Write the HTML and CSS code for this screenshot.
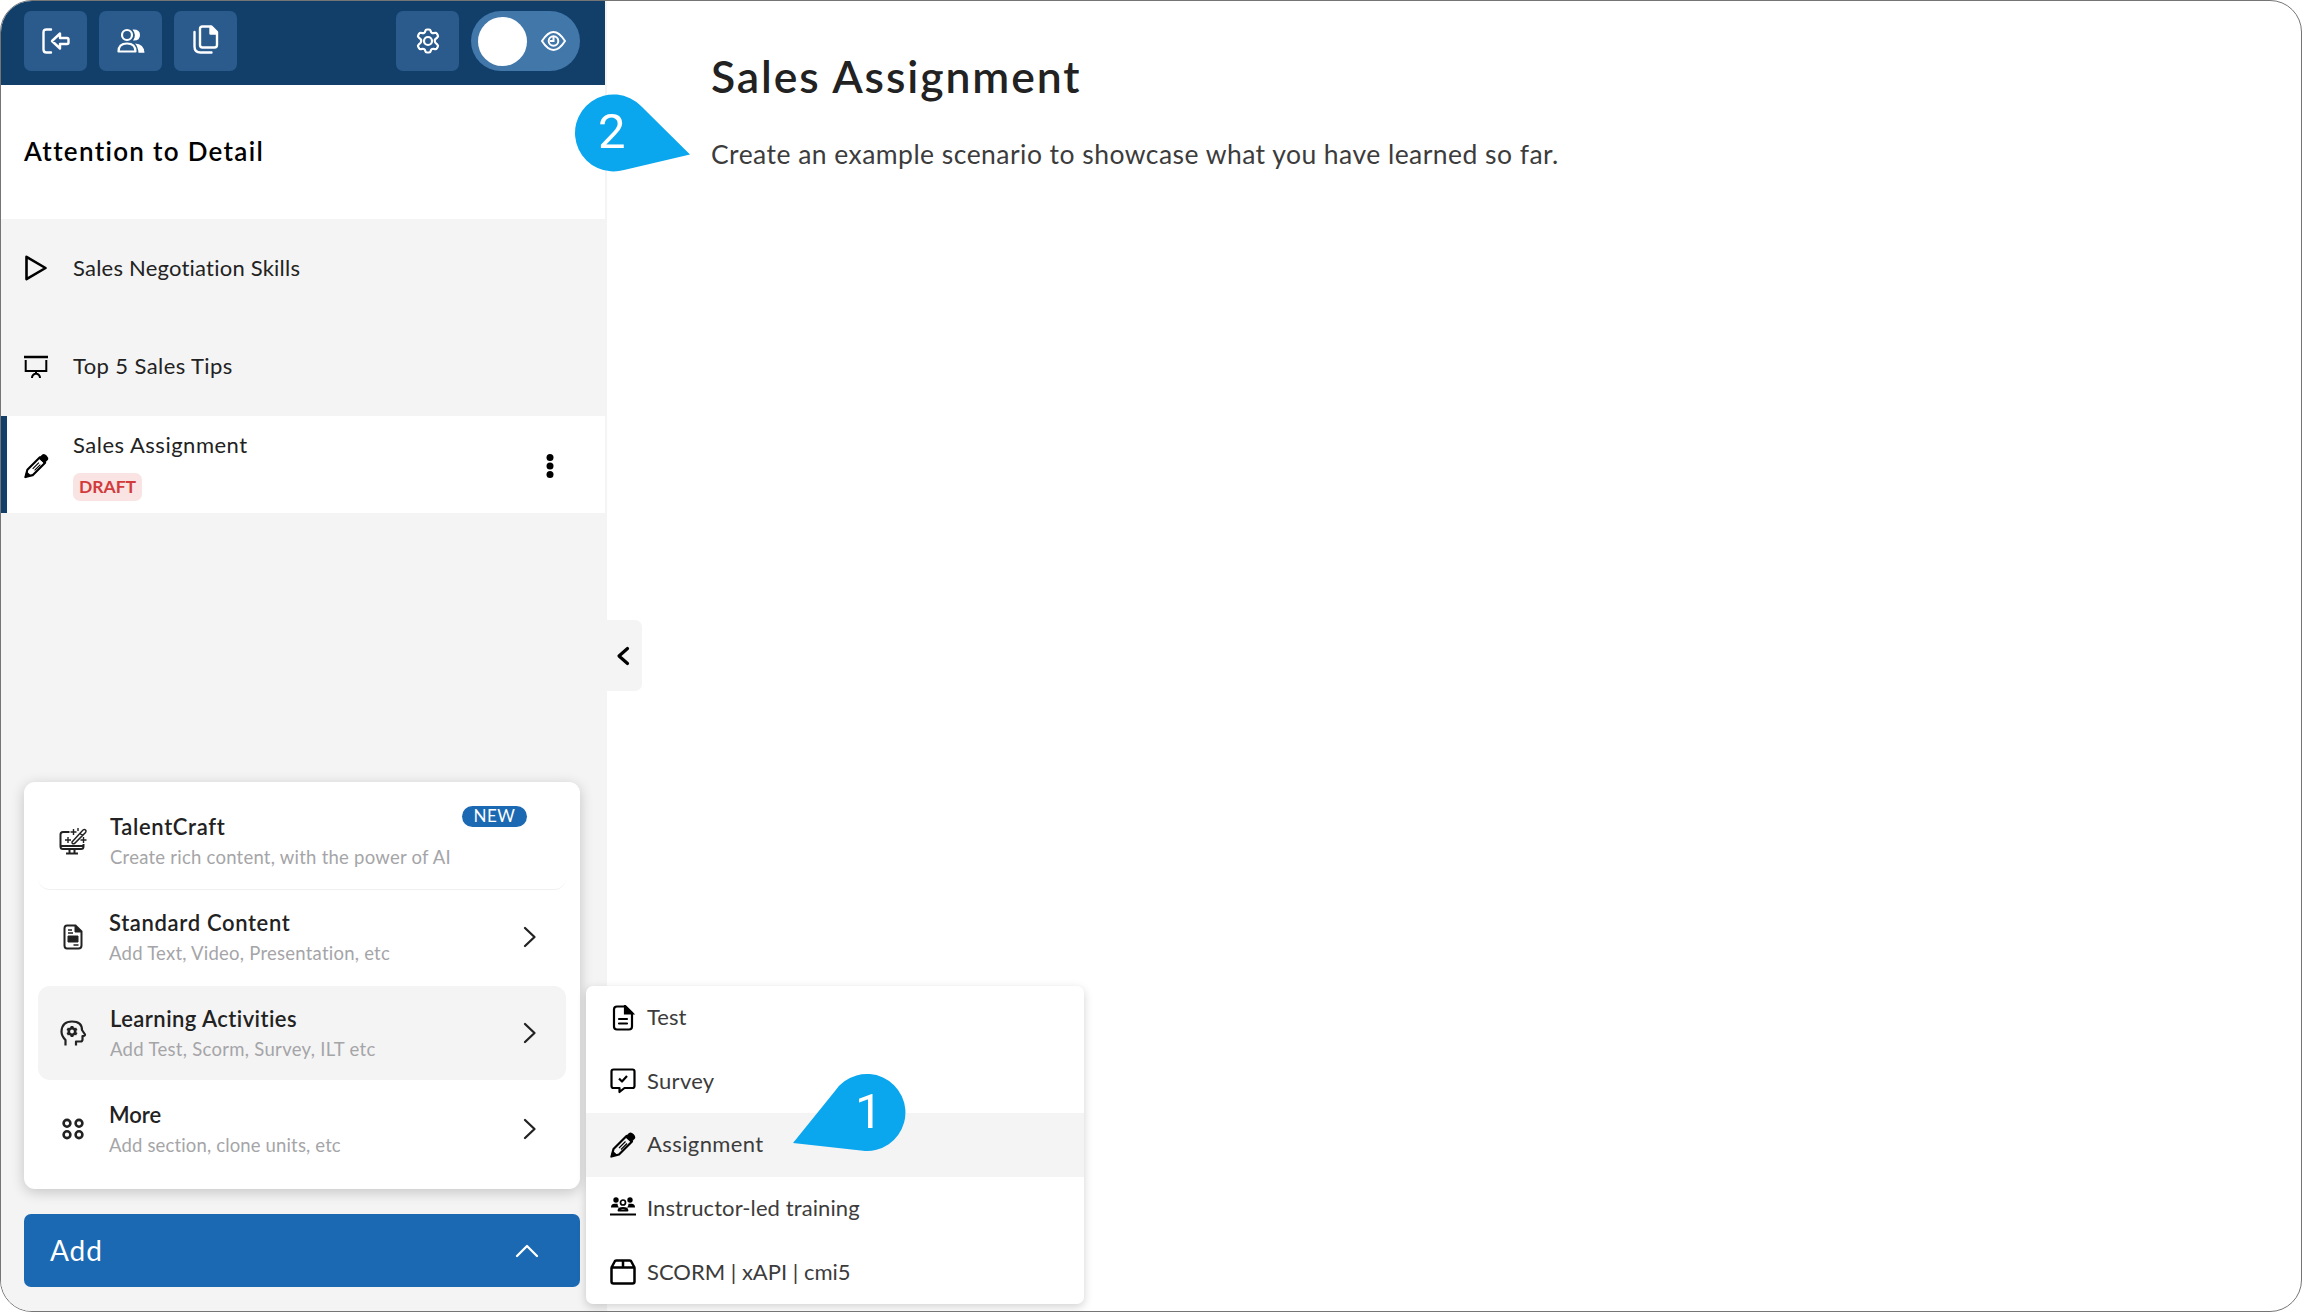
FILE: index.html
```html
<!DOCTYPE html>
<html lang="en">
<head>
	<meta charset="UTF-8">
	<title>Sales Assignment</title>
	<link rel="stylesheet" href="styles.css">
</head>
<body>
<svg class="defs" width="0" height="0">
	<symbol id="i-pencil" viewBox="0 0 26 26">
		<path d="M1.500 24.500L3.500 17 16.500 4l5.500 5.500L9 22.500z" fill="none" stroke="currentColor" stroke-width="2.200" stroke-linejoin="round"/>
		<path d="M15 5l4-4q2-1.500 4.500 1t1.500 4.500l-4 4zM.5 25.500l2-7 5 4.500z" fill="currentColor"/>
		<path d="M9 16l6.500-6.500M11 17.500l6-6" stroke="currentColor" stroke-width="1.200"/>
	</symbol>
	<symbol id="i-right" viewBox="0 0 14 22">
		<path d="M2 2l9.500 9L2 20" fill="none" stroke="currentColor" stroke-width="2.300" stroke-linecap="round" stroke-linejoin="round"/>
	</symbol>
</svg>

<div class="app">
	<div class="sidebar">
		<div class="toolbar">
			<button class="tool">
				<svg width="28" height="26" viewBox="0 0 28 26" fill="none" stroke="currentColor" stroke-width="2.400" stroke-linecap="round" stroke-linejoin="round"><path d="M9 1.500H4.500q-3 0-3 3v17q0 3 3 3H9M10 13l8-7.500v4.500h7q1.500 0 1.500 1.500v3q0 1.500-1.500 1.500h-7v4.500z"/></svg>
			</button>
			<button class="tool">
				<svg width="28" height="26" viewBox="0 0 28 26" fill="none" stroke="currentColor" stroke-width="2.200"><circle cx="10" cy="7" r="5"/><path d="M1.500 23.500q0-8 8.500-8t8.500 8z" stroke-linejoin="round"/><path d="M15.500 1.500q7.500-.5 7.500 5.500t-7 5.500q4-5.500-.5-11zM18 15.500q9 .5 9.500 9.200h-6q-.5-6-3.500-9.200z" fill="currentColor" stroke="none"/></svg>
			</button>
			<button class="tool">
				<svg class="up" width="26" height="29" viewBox="0 0 26 29" fill="none" stroke="currentColor" stroke-width="2.400" stroke-linecap="round" stroke-linejoin="round"><path d="M9.500 1.500h9l5.500 5.500v13q0 2.500-2.500 2.500h-12Q7 22.500 7 20V4q0-2.500 2.500-2.500zM1.500 7v14.500q0 6 6 6H18.500"/><path d="M17.500 2v6.500h6z" fill="currentColor"/></svg>
			</button>
			<span class="space"></span>
			<button class="tool">
				<svg width="26" height="26" viewBox="0 0 26 26" fill="none" stroke="currentColor" stroke-width="2.200" stroke-linejoin="round"><path d="M10.300 3q.3-1.500 1.700-1.500h2q1.400 0 1.700 1.500.5 2.700 3.300 2.100 2-.8 2.800.4l1 1.800q.7 1.200-.5 2.200-2.600 1.700-2.600 3.500t2.600 3.500q1.200 1 .5 2.200l-1 1.800q-.8 1.200-2.800.4-2.800-.6-3.300 2.100-.3 1.500-1.700 1.500h-2q-1.400 0-1.700-1.500-.5-2.700-3.300-2.100-2 .8-2.800-.4l-1-1.800q-.7-1.200.5-2.200 2.600-1.700 2.600-3.500T3.700 9.500q-1.200-1-.5-2.200l1-1.800q.8-1.200 2.800-.4 2.800.6 3.300-2.100z"/><circle cx="13" cy="13" r="4"/></svg>
			</button>
			<div class="toggle">
				<span class="knob"></span>
				<svg width="25" height="20" viewBox="0 0 25 20" fill="none" stroke="currentColor" stroke-width="2"><path d="M1 10Q12.500-8 24 10 12.500 28 1 10z" stroke-linejoin="round"/><circle cx="12.500" cy="10" r="4.800"/><path d="M12.500 6v4h-3.500"/></svg>
			</div>
		</div>

		<div class="course">Attention to Detail</div>

		<div class="units">
			<div class="unit">
				<svg width="24" height="26" viewBox="0 0 24 26" fill="none" stroke="currentColor" stroke-width="2.600" stroke-linejoin="round"><path d="M2.500 1.800L21.500 13 2.500 24.200z"/></svg>
				<span class="n1">Sales Negotiation Skills</span>
			</div>
			<div class="unit">
				<svg width="24" height="24" viewBox="0 0 24 24" fill="none" stroke="currentColor" stroke-width="2"><path d="M0 2h24" stroke-width="2.500"/><path d="M1.700 5v11h20.600V5M12 16v3.500M8 23q0-3.500 4-4.500 4 1 4 4.500"/></svg>
				<span class="n2">Top 5 Sales Tips</span>
			</div>
			<div class="unit active">
				<svg width="25" height="26"><use href="#i-pencil"/></svg>
				<div class="name">
					<span class="n3">Sales Assignment</span>
					<span class="draft">DRAFT</span>
				</div>
				<svg class="dots" width="8" height="26" viewBox="0 0 8 26" fill="currentColor"><circle cx="4" cy="4.500" r="3.500"/><circle cx="4" cy="13" r="3.500"/><circle cx="4" cy="21.500" r="3.500"/></svg>
			</div>
		</div>

		<div class="panel">
			<div class="row craft">
				<svg width="28" height="27" viewBox="0 0 28 27" fill="none" stroke="currentColor" stroke-width="2"><path d="M10.500 4H4q-2.500 0-2.500 2.500v12Q1.500 21 4 21h18q2.500 0 2.500-2.500V16M1.500 18h23M10.500 21v4M15.500 21v4M7 25.500h12"/><path d="M13 14L24 2q1.500-1 2.500 0t0 2.500L15.500 15.500Q13 16.500 13 14zM21 5.500l2.500 2" stroke-width="1.500"/><path d="M14.500 1v6M11.500 4h6M9 9v6M6 12h6M24.500 9v6M21.500 12h6M19 0v3" stroke-width="1.400"/></svg>
				<div class="txt">
					<b class="r1">TalentCraft</b>
					<small class="s1">Create rich content, with the power of AI</small>
				</div>
				<span class="new">NEW</span>
			</div>
			<div class="row">
				<svg width="28" height="26" viewBox="0 0 28 26" fill="none" stroke="currentColor" stroke-width="2"><path d="M8 1.500h8.500l6 6v14q0 3-3 3H8q-2.500 0-2.500-3v-17q0-3 2.500-3z"/><path d="M16 1v7h7zM9 12h10v6H9z" fill="currentColor" stroke-width="1"/><path d="M9 6h4M9 9h5M14.500 21h5" stroke-width="1.300"/></svg>
				<div class="txt left">
					<b class="r2">Standard Content</b>
					<small class="s2">Add Text, Video, Presentation, etc</small>
				</div>
				<svg class="go" width="14" height="22"><use href="#i-right"/></svg>
			</div>
			<div class="row on">
				<svg width="28" height="26" viewBox="0 0 28 26" fill="none" stroke="currentColor" stroke-width="2.200"><path d="M6.500 25.500V20Q2.500 16 2.500 11.500 3 1.500 13 1.500T23 10l3 4.500q.3 1.500-2.500 1.500v3.500q0 2-2 2h-4.500v4" stroke-linejoin="round"/><circle cx="13" cy="11.500" r="3.200" stroke-width="2.600"/><path d="M13 6v2.500M13 14.500V17M8.200 8.700l2 1.200M15.800 13.100l2 1.200M8.200 14.300l2-1.200M15.800 9.900l2-1.200" stroke-width="2.800"/></svg>
				<div class="txt">
					<b class="r3">Learning Activities</b>
					<small class="s3">Add Test, Scorm, Survey, ILT etc</small>
				</div>
				<svg class="go" width="14" height="22"><use href="#i-right"/></svg>
			</div>
			<div class="row">
				<svg width="28" height="26" viewBox="0 0 28 26" fill="none" stroke="currentColor" stroke-width="2.600"><circle cx="8" cy="7.300" r="3.400"/><circle cx="20" cy="7.300" r="3.400"/><circle cx="8" cy="18.700" r="3.400"/><circle cx="20" cy="18.700" r="3.400"/></svg>
				<div class="txt left">
					<b class="r4">More</b>
					<small class="s4">Add section, clone units, etc</small>
				</div>
				<svg class="go" width="14" height="22"><use href="#i-right"/></svg>
			</div>
		</div>

		<button class="add">
			<span>Add</span>
			<svg width="24" height="14" viewBox="0 0 24 14" fill="none" stroke="currentColor" stroke-width="2.300" stroke-linecap="round" stroke-linejoin="round"><path d="M2 12L12 2l10 10"/></svg>
		</button>
	</div>

	<div class="content">
		<h1>Sales Assignment</h1>
		<p>Create an example scenario to showcase what you have learned so far.</p>
	</div>

	<div class="collapse">
		<svg width="14" height="20" viewBox="0 0 14 20" fill="none" stroke="currentColor" stroke-width="3.200" stroke-linecap="round" stroke-linejoin="round"><path d="M11.500 2.500L3 10l8.500 7.500"/></svg>
	</div>

	<div class="menu">
		<div class="item">
			<svg width="26" height="26" viewBox="0 0 26 26" fill="none" stroke="currentColor" stroke-width="2.200"><path d="M7 1.500h8.500l6.500 6.500v13.500q0 3-3 3H7q-3 0-3-3v-17q0-3 3-3z"/><path d="M15 1v7.500h7.500z" fill="currentColor"/><path d="M9 14h8M9 18.500h8" stroke-linecap="round"/></svg>
			<span class="m1">Test</span>
		</div>
		<div class="item">
			<svg width="26" height="26" viewBox="0 0 26 26" fill="none" stroke="currentColor" stroke-width="2.200" stroke-linejoin="round"><path d="M3.500 1.500h19q2 0 2 2v14.500q0 2-2 2H14.500L9.500 24v-4h-6q-2 0-2-2V3.500q0-2 2-2z"/><path d="M9 10.500l3 3 5-5.500"/></svg>
			<span class="m2">Survey</span>
		</div>
		<div class="item on">
			<svg width="26" height="26"><use href="#i-pencil"/></svg>
			<span class="m3">Assignment</span>
		</div>
		<div class="item">
			<svg class="ilt" width="26" height="20" viewBox="0 0 26 20" fill="currentColor"><circle cx="6" cy="3" r="2.700"/><circle cx="20" cy="3" r="2.700"/><path d="M1 10.500Q1 6.800 4.500 6.800h3Q7.500 9 9 10.500zM25 10.500Q25 6.800 21.500 6.800h-3Q18.500 9 17 10.500zM0 16.500h26v2H0z"/><circle cx="13" cy="5.500" r="2.500" fill="none" stroke="currentColor" stroke-width="1.700"/><path d="M8.500 13.500q0-2.500 4.500-2.500t4.500 2.500z" fill="none" stroke="currentColor" stroke-width="1.800" stroke-linejoin="round"/></svg>
			<span class="m4">Instructor-led training</span>
		</div>
		<div class="item">
			<svg width="26" height="26" viewBox="0 0 26 26" fill="none" stroke="currentColor" stroke-width="2.500" stroke-linejoin="round"><path d="M1.500 8.500h23v14q0 2-2 2h-19q-2 0-2-2zL5 2q.5-.5 1.500-.5h13q1 0 1.500.5l3.500 6.500M13 1.500v7"/></svg>
			<span class="m5">SCORM | xAPI | cmi5</span>
		</div>
	</div>

	<div class="pin pin-1">
		<svg width="114" height="78" viewBox="0 0 114 78"><path d="M0 69L42 17A38.500 38.500 0 1 1 70 76.800z"/></svg>
		<span>1</span>
	</div>
	<div class="pin pin-2">
		<svg width="116" height="78" viewBox="0 0 116 78"><path d="M115 60.500L66 12A38.500 38.500 0 1 0 49 76z"/></svg>
		<span>2</span>
	</div>
</div>
</body>
</html>
```
FILE: styles.css
```css
*{margin: 0;padding: 0;box-sizing: border-box;}
html,body{height: 100%;}
body{
	background: #fff;
	font-family: Lato, "Open Sans", sans-serif;
	color: #000;
}
svg{display: block;flex: none;}
button{border: 0;font-family: inherit;}
.defs{position: absolute;}
.app{
	position: relative;
	display: flex;
	width: 2302px;
	height: 1312px;
	border: 1px solid #757575;
	border-radius: 32px;
	overflow: hidden;
}

/* sidebar */
.sidebar{
	display: flex;
	flex-direction: column;
	width: 606px;
	padding-right: 2px;
	background: #f4f4f4;
}
.toolbar{
	display: flex;
	gap: 12px;
	height: 84px;
	padding: 10px 25px 0 23px;
	background: #113f6a;
}
.tool{
	display: flex;
	align-items: center;
	justify-content: center;
	width: 63px;
	height: 60px;
	border-radius: 7px;
	background: #2b5b8c;
	color: #fff;
}
.tool .up{margin-top: -4px;}
.space{flex: 1;}
.toggle{
	display: flex;
	align-items: center;
	justify-content: space-between;
	width: 109px;
	height: 60px;
	padding: 0 14px 0 7px;
	border-radius: 30px;
	background: #4277aa;
	color: #fff;
}
.knob{
	width: 49px;
	height: 49px;
	border-radius: 50%;
	background: #fff;
}
.course{
	height: 134px;
	padding: 48px 0 0 23px;
	background: #fff;
	font-size: 26px;
	font-weight: 600;
	line-height: 36px;
	letter-spacing: 1.300px;
}
.unit{
	display: flex;
	align-items: center;
	gap: 25px;
	height: 98.500px;
	padding-left: 23px;
	font-size: 22px;
	color: #222;
}
.unit span{padding-bottom: 2px;}
.unit svg{color: #000;}
.unit.active{
	gap: 24px;
	height: 97px;
	padding: 2px 51px 0 17px;
	border-left: 6px solid #113f6a;
	background: #fff;
}
.name{
	display: flex;
	flex-direction: column;
	align-items: flex-start;
	flex: 1;
	gap: 11px;
	line-height: 30px;
}
.n1{letter-spacing: .220px;}
.n2{letter-spacing: .400px;}
.n3{letter-spacing: .500px;}
.name .draft{
	height: 28px;
	padding: 0 6px;
	border-radius: 7px;
	background: #fae3e3;
	color: #d23b3b;
	font-size: 17.500px;
	font-weight: 700;
	line-height: 28px;
}

/* add panel */
.panel{
	margin: auto 25px 25px 23px;
	height: 407px;
	padding: 10px 14px;
	border-radius: 11px;
	background: #fff;
	box-shadow: 0 3px 14px rgba(0, 0, 0, .2);
}
.row{
	display: flex;
	align-items: center;
	height: 94px;
	margin-bottom: 2px;
	padding: 0 29px 0 21px;
	border-radius: 12px;
	color: #222;
}
.row.craft{
	height: 98px;
	padding-top: 2px;
	border-bottom: 1px solid #f0f0f0;
	margin-bottom: 0;
}
.row.on{background: #f4f4f4;}
.txt{
	display: flex;
	flex-direction: column;
	flex: 1;
	padding-top: 2px;
	margin-left: 23px;
	white-space: nowrap;
}
.txt.left{margin-left: 22px;}
.txt b{
	font-size: 22px;
	font-weight: 600;
	line-height: 30px;
}
.txt small{
	font-size: 18.500px;
	line-height: 31px;
	color: #a5a5a8;
}
.txt .r1,.txt .r2{letter-spacing: .650px;}
.txt .r3{letter-spacing: .450px;}
.txt .s1,.txt .s2{letter-spacing: .240px;}
.txt .s3{letter-spacing: .300px;}
.txt .s4{letter-spacing: .150px;}
.new{
	align-self: flex-start;
	width: 65px;
	height: 21px;
	margin: 12px 10px 0 0;
	border-radius: 11px;
	background: #1c69b3;
	color: #fff;
	font-size: 17px;
	line-height: 20px;
	text-align: center;
	letter-spacing: .5px;
}
.add{
	display: flex;
	align-items: center;
	justify-content: space-between;
	height: 73px;
	margin: 0 25px 24px 23px;
	padding: 0 41px 0 26px;
	border-radius: 7px;
	background: #1c69b3;
	color: #fff;
	font-size: 28px;
	letter-spacing: .9px;
}
.add span{padding-bottom: 2px;}

/* unit content */
.content{
	flex: 1;
	padding: 47px 0 0 104px;
}
.content h1{
	color: #222;
	font-size: 44.500px;
	font-weight: 600;
	line-height: 56px;
	letter-spacing: 1.900px;
}
.content p{
	margin-top: 32px;
	color: #3c3c3c;
	font-size: 26.500px;
	line-height: 36px;
	letter-spacing: .460px;
}
.collapse{
	position: absolute;
	top: 619px;
	left: 606px;
	display: flex;
	align-items: center;
	justify-content: center;
	width: 35px;
	height: 71px;
	padding-right: 3px;
	border-radius: 0 7px 7px 0;
	background: #f4f4f4;
}

/* flyout menu */
.menu{
	position: absolute;
	top: 985px;
	left: 585px;
	width: 498px;
	height: 318px;
	border-radius: 7px;
	background: #fff;
	box-shadow: 0 3px 10px rgba(0, 0, 0, .18);
}
.item{
	display: flex;
	align-items: center;
	gap: 11px;
	height: 63.600px;
	padding-left: 24px;
	color: #3c3c3c;
	font-size: 22px;
}
.item span{padding-bottom: 2px;}
.item svg{color: #000;}
.item .ilt{margin-top: -4px;}
.item.on{background: #f4f4f4;}
.m2{letter-spacing: .300px;}
.m3{letter-spacing: .400px;}
.m4{letter-spacing: .100px;}

/* numbered pins */
.pin{position: absolute;}
.pin svg{fill: #0aa6ee;}
.pin span{
	position: absolute;
	top: 9px;
	color: #fff;
	font-family: Roboto, sans-serif;
	font-size: 49px;
	line-height: 58px;
}
.pin-1{top: 1073px;left: 792px;}
.pin-1 span{left: 62px;}
.pin-2{top: 93px;left: 574px;}
.pin-2 span{left: 23px;}
```
